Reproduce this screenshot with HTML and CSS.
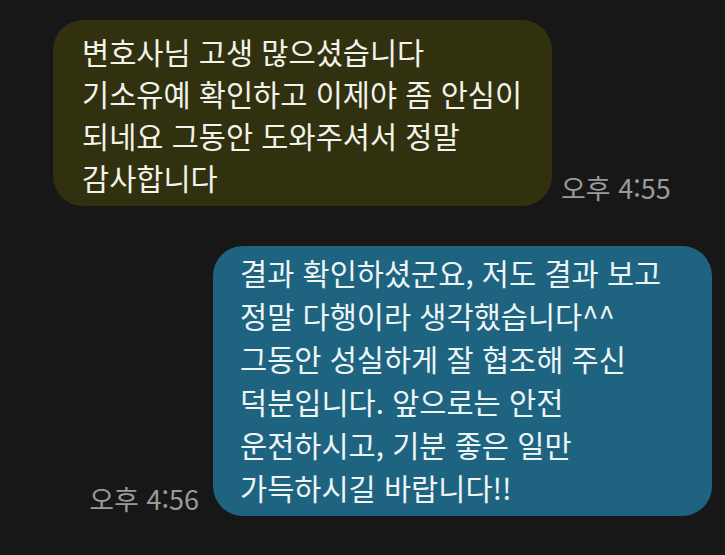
FILE: index.html
```html
<!DOCTYPE html>
<html lang="ko">
<head>
<meta charset="utf-8">
<link rel="stylesheet" href="styles.css">
</head>
<body>
<div class="chat">
  <div class="row row-in">
    <div class="bubble bubble-in">변호사님 고생 많으셨습니다<br>기소유예 확인하고 이제야 좀 안심이<br>되네요 그동안 도와주셔서 정말<br>감사합니다</div>
    <div class="time time-in">오후 4:55</div>
  </div>
  <div class="row row-out">
    <div class="time time-out">오후 4:56</div>
    <div class="bubble bubble-out">결과 확인하셨군요, 저도 결과 보고<br>정말 다행이라 생각했습니다^^<br>그동안 성실하게 잘 협조해 주신<br>덕분입니다. 앞으로는 안전<br>운전하시고, 기분 좋은 일만<br>가득하시길 바랍니다!!</div>
  </div>
</div>
</body>
</html>
```

FILE: styles.css
```css
html, body {
  margin: 0;
  padding: 0;
  background: #171717;
}
body {
  width: 725px;
  height: 555px;
  overflow: hidden;
  font-family: "Noto Sans CJK KR", "Noto Sans", sans-serif;
}
.chat {
  display: flex;
  flex-direction: column;
  gap: 40px;
  padding-top: 20px;
}
.row {
  display: flex;
  align-items: flex-end;
}
.row-in {
  padding-left: 53px;
}
.row-out {
  justify-content: flex-end;
  padding-right: 13px;
}
.bubble {
  box-sizing: border-box;
  width: 499px;
  border-radius: 30px;
  font-size: 29.5px;
  line-height: 42px;
  color: #f3f3ec;
  padding: 10px 12px 8px 29px;
  white-space: nowrap;
}
.bubble-in {
  background: #31310f;
}
.bubble-out {
  background: #1e6480;
  color: #eef5f7;
  line-height: 43px;
  padding: 5px 12px 7px 27px;
}
.time {
  font-size: 27px;
  color: #9a9a9a;
  line-height: 30px;
  white-space: nowrap;
}
.time-in {
  margin-left: 9px;
  margin-bottom: 3px;
}
.time-out {
  margin-right: 14px;
  margin-bottom: 2px;
}
```
